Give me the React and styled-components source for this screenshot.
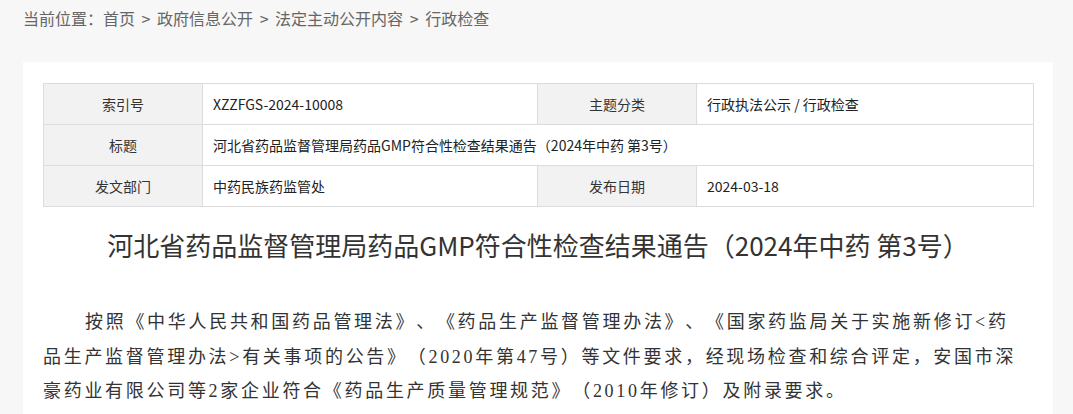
import styled, { createGlobalStyle } from "styled-components"

const GlobalStyle = createGlobalStyle`
  html, body {
    margin: 0;
    padding: 0;
    background: #f7f7f7;
  }
  * { box-sizing: border-box; }
`

const Page = styled.div`
  width: 1073px;
  padding: 0 20px 0 23px;
  font-family: 'Noto Sans CJK SC', sans-serif;
  text-spacing-trim: space-all;
`

const Crumb = styled.div`
  height: 62px;
  padding-top: 1px;
  line-height: 34px;
  font-size: 16px;
  color: #666;
  white-space: pre;
  word-spacing: 3px;
`

const Panel = styled.div`
  width: 1030px;
  background: #fff;
  padding: 21px 20px 30px 20px;
`

const InfoTable = styled.table`
  width: 990px;
  border-collapse: collapse;
  table-layout: fixed;
  border: 1px solid #dcdcdc;
`

const Row = styled.tr`
  height: 41px;
`

const Label = styled.td`
  width: ${(p) => p.w}px;
  border: 1px solid #dcdcdc;
  background: #f2f2f2;
  text-align: center;
  font-size: 14px;
  color: #333;
  padding: 0;
`

const Value = styled.td`
  width: ${(p) => p.w}px;
  border: 1px solid #dcdcdc;
  padding: 0 0 0 10px;
  font-size: 14px;
  color: #222;
`

const Title = styled.h1`
  margin: 20px 0 0 0;
  line-height: 36px;
  font-size: 26px;
  font-weight: normal;
  text-align: center;
  color: #333;
`

const Body = styled.p`
  width: 982px;
  margin: 42px 0 0 0;
  font-family: 'Liberation Serif', 'Noto Sans CJK SC', serif;
  font-size: 18px;
  line-height: 34.5px;
  letter-spacing: 2.7px;
  text-indent: 42px;
  color: #333;
  text-align: left;
`

const rows = [
  ["索引号", "XZZFGS-2024-10008", "主题分类", "行政执法公示 / 行政检查"],
  ["标题", "河北省药品监督管理局药品GMP符合性检查结果通告（2024年中药 第3号）"],
  ["发文部门", "中药民族药监管处", "发布日期", "2024-03-18"],
]

export default function App() {
  return (
    <>
      <GlobalStyle />
      <Page>
        <Crumb>当前位置：首页 &gt; 政府信息公开 &gt; 法定主动公开内容 &gt; 行政检查</Crumb>
        <Panel>
          <InfoTable>
            <colgroup>
              <col style={{ width: 159 }} />
              <col style={{ width: 335 }} />
              <col style={{ width: 159 }} />
              <col style={{ width: 337 }} />
            </colgroup>
            <tbody>
              {rows.map((r) => (
                <Row key={r[0]}>
                  <Label w={159}>{r[0]}</Label>
                  {r.length === 2 ? (
                    <Value colSpan={3}>{r[1]}</Value>
                  ) : (
                    <>
                      <Value w={335}>{r[1]}</Value>
                      <Label w={159}>{r[2]}</Label>
                      <Value w={337}>{r[3]}</Value>
                    </>
                  )}
                </Row>
              ))}
            </tbody>
          </InfoTable>
          <Title>河北省药品监督管理局药品GMP符合性检查结果通告（2024年中药 第3号）</Title>
          <Body>
            按照《中华人民共和国药品管理法》、《药品生产监督管理办法》、《国家药监局关于实施新修订&lt;药品生产监督管理办法&gt;有关事项的公告》（2020年第47号）等文件要求，经现场检查和综合评定，安国市深豪药业有限公司等2家企业符合《药品生产质量管理规范》（2010年修订）及附录要求。
          </Body>
        </Panel>
      </Page>
    </>
  )
}
